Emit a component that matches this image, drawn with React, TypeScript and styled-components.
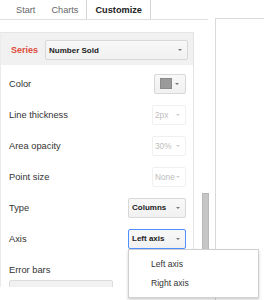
import React from "react";
import styled, { createGlobalStyle } from "styled-components";

const Global = createGlobalStyle`
  html, body { margin: 0; padding: 0; background: #fff; }
  body { font-family: "Liberation Sans", Arial, sans-serif; font-size: 9.3px; color: #333; }
  * { box-sizing: border-box; }
`;

const Root = styled.div`
  position: relative;
  width: 264px;
  height: 300px;
  overflow: hidden;
  display: flex;
  background: #fff;
`;

const LeftCol = styled.div`
  width: 215px;
  flex: none;
  display: flex;
  flex-direction: column;
`;

const TabBar = styled.div`
  display: flex;
  height: 20px;
  margin-right: 7px;
  padding-left: 8px;
  border-bottom: 1px solid #e0e0e0;
`;

const Tab = styled.div<{ $active?: boolean }>`
  height: 20px;
  margin-top: -1px;
  padding: 0 ${(p) => (p.$active ? "8px" : "7px")};
  display: flex;
  align-items: center;
  border: 1px solid ${(p) => (p.$active ? "#d3d3d3" : "transparent")};
  border-bottom: none;
  background: ${(p) => (p.$active ? "#fff" : "transparent")};
  color: ${(p) => (p.$active ? "#222" : "#666")};
  font-weight: ${(p) => (p.$active ? "bold" : "normal")};
  font-size: 9.2px;
`;

const PanelWrap = styled.div`
  margin-top: 12px;
  display: flex;
  height: 255px;
`;

const Panel = styled.div`
  width: 194px;
  display: flex;
  flex-direction: column;
  border-left: 1px solid #ebebeb;
  border-right: 1px solid #e3e3e3;
`;

const Header = styled.div`
  height: 33px;
  flex: none;
  display: flex;
  align-items: flex-start;
  padding: 7px 5px 0 10px;
  background: #f1f1f1;
  border-top: 1px solid #e5e5e5;
  gap: 7px;
`;

const SeriesLabel = styled.span`
  color: #dd4b39;
  font-weight: bold;
  font-size: 9px;
  line-height: 20px;
`;

const Content = styled.div`
  flex: 1;
  overflow: hidden;
  padding: 3px 7px 0 8px;
`;

const Row = styled.div`
  height: 31px;
  display: flex;
  align-items: center;
  justify-content: space-between;
`;

const Label = styled.span`
  color: #333;
`;

const Select = styled.div<{ $w: number; $disabled?: boolean; $focus?: boolean; $grow?: boolean }>`
  width: ${(p) => (p.$grow ? "auto" : `${p.$w}px`)};
  flex: ${(p) => (p.$grow ? "1" : "none")};
  height: 20px;
  display: flex;
  align-items: center;
  justify-content: space-between;
  padding: 0 4px 0 ${(p) => (p.$disabled ? "2px" : "3px")};
  border: 1px solid ${(p) => (p.$focus ? "#4d90fe" : p.$disabled ? "#f0f0f0" : "#d8d8d8")};
  border-radius: 2px;
  background: ${(p) => (p.$disabled ? "#fff" : "linear-gradient(#f8f8f8, #f1f1f1)")};
  color: ${(p) => (p.$disabled ? "#bcbcbc" : "#222")};
  font-weight: ${(p) => (p.$disabled ? "normal" : "bold")};
  font-size: ${(p) => (p.$disabled ? "8.3px" : "8px")};
`;

const Arrow = styled.span<{ $light?: boolean }>`
  width: 0;
  height: 0;
  border-left: 2px solid transparent;
  border-right: 2px solid transparent;
  border-top: 2px solid ${(p) => (p.$light ? "#cfcfcf" : "#777")};
  margin-right: 1px;
`;

const ColorButton = styled.div`
  width: 32px;
  height: 20px;
  display: flex;
  align-items: center;
  justify-content: space-between;
  padding: 0 5px 0 5px;
  border: 1px solid #d8d8d8;
  border-radius: 2px;
  background: linear-gradient(#f8f8f8, #f1f1f1);
`;

const Swatch = styled.span`
  width: 12px;
  height: 11px;
  background: #9a9a9a;
  border: 1px solid #8a8a8a;
`;

const ErrorBlock = styled.div`
  padding-top: 10px;
`;

const ErrorLabel = styled.div`
  line-height: 12px;
`;

const WideBox = styled.div`
  margin-top: 4px;
  width: 104px;
  height: 20px;
  border: 1px solid #dcdcdc;
  border-radius: 2px;
  background: #f1f1f1;
`;

const Track = styled.div`
  flex: 1;
  display: flex;
  padding-top: 161px;
  padding-left: 8px;
`;

const Thumb = styled.div`
  width: 7px;
  height: 94px;
  background: #c6c6c6;
  border: 1px solid #b8b8b8;
`;

const RightPane = styled.div`
  flex: 1;
  margin-top: 18px;
  border-left: 1px solid #d9d9d9;
  border-top: 1px solid #d9d9d9;
`;

const Menu = styled.div`
  position: absolute;
  left: 128px;
  top: 249px;
  width: 131px;
  padding: 5px 0 4px;
  background: #fff;
  border: 1px solid #cfcfcf;
  box-shadow: 0 2px 3px rgba(0, 0, 0, 0.18);
`;

const MenuItem = styled.div`
  height: 19px;
  line-height: 19px;
  padding-left: 22px;
  color: #333;
  font-size: 8.6px;
`;

export default function App() {
  return (
    <Root>
      <Global />
      <LeftCol>
        <TabBar>
          <Tab>Start</Tab>
          <Tab>Charts</Tab>
          <Tab $active>Customize</Tab>
        </TabBar>
        <PanelWrap>
          <Panel>
            <Header>
              <SeriesLabel>Series</SeriesLabel>
              <Select $w={0} $grow>
                <span>Number Sold</span>
                <Arrow />
              </Select>
            </Header>
            <Content>
              <Row>
                <Label>Color</Label>
                <ColorButton>
                  <Swatch />
                  <Arrow />
                </ColorButton>
              </Row>
              <Row>
                <Label>Line thickness</Label>
                <Select $w={34} $disabled>
                  <span>2px</span>
                  <Arrow $light />
                </Select>
              </Row>
              <Row>
                <Label>Area opacity</Label>
                <Select $w={34} $disabled>
                  <span>30%</span>
                  <Arrow $light />
                </Select>
              </Row>
              <Row>
                <Label>Point size</Label>
                <Select $w={34} $disabled>
                  <span>None</span>
                  <Arrow $light />
                </Select>
              </Row>
              <Row>
                <Label>Type</Label>
                <Select $w={58}>
                  <span>Columns</span>
                  <Arrow />
                </Select>
              </Row>
              <Row>
                <Label>Axis</Label>
                <Select $w={58} $focus>
                  <span>Left axis</span>
                  <Arrow />
                </Select>
              </Row>
              <ErrorBlock>
                <ErrorLabel>Error bars</ErrorLabel>
                <WideBox />
              </ErrorBlock>
            </Content>
          </Panel>
          <Track>
            <Thumb />
          </Track>
        </PanelWrap>
      </LeftCol>
      <RightPane />
      <Menu>
        <MenuItem>Left axis</MenuItem>
        <MenuItem>Right axis</MenuItem>
      </Menu>
    </Root>
  );
}
